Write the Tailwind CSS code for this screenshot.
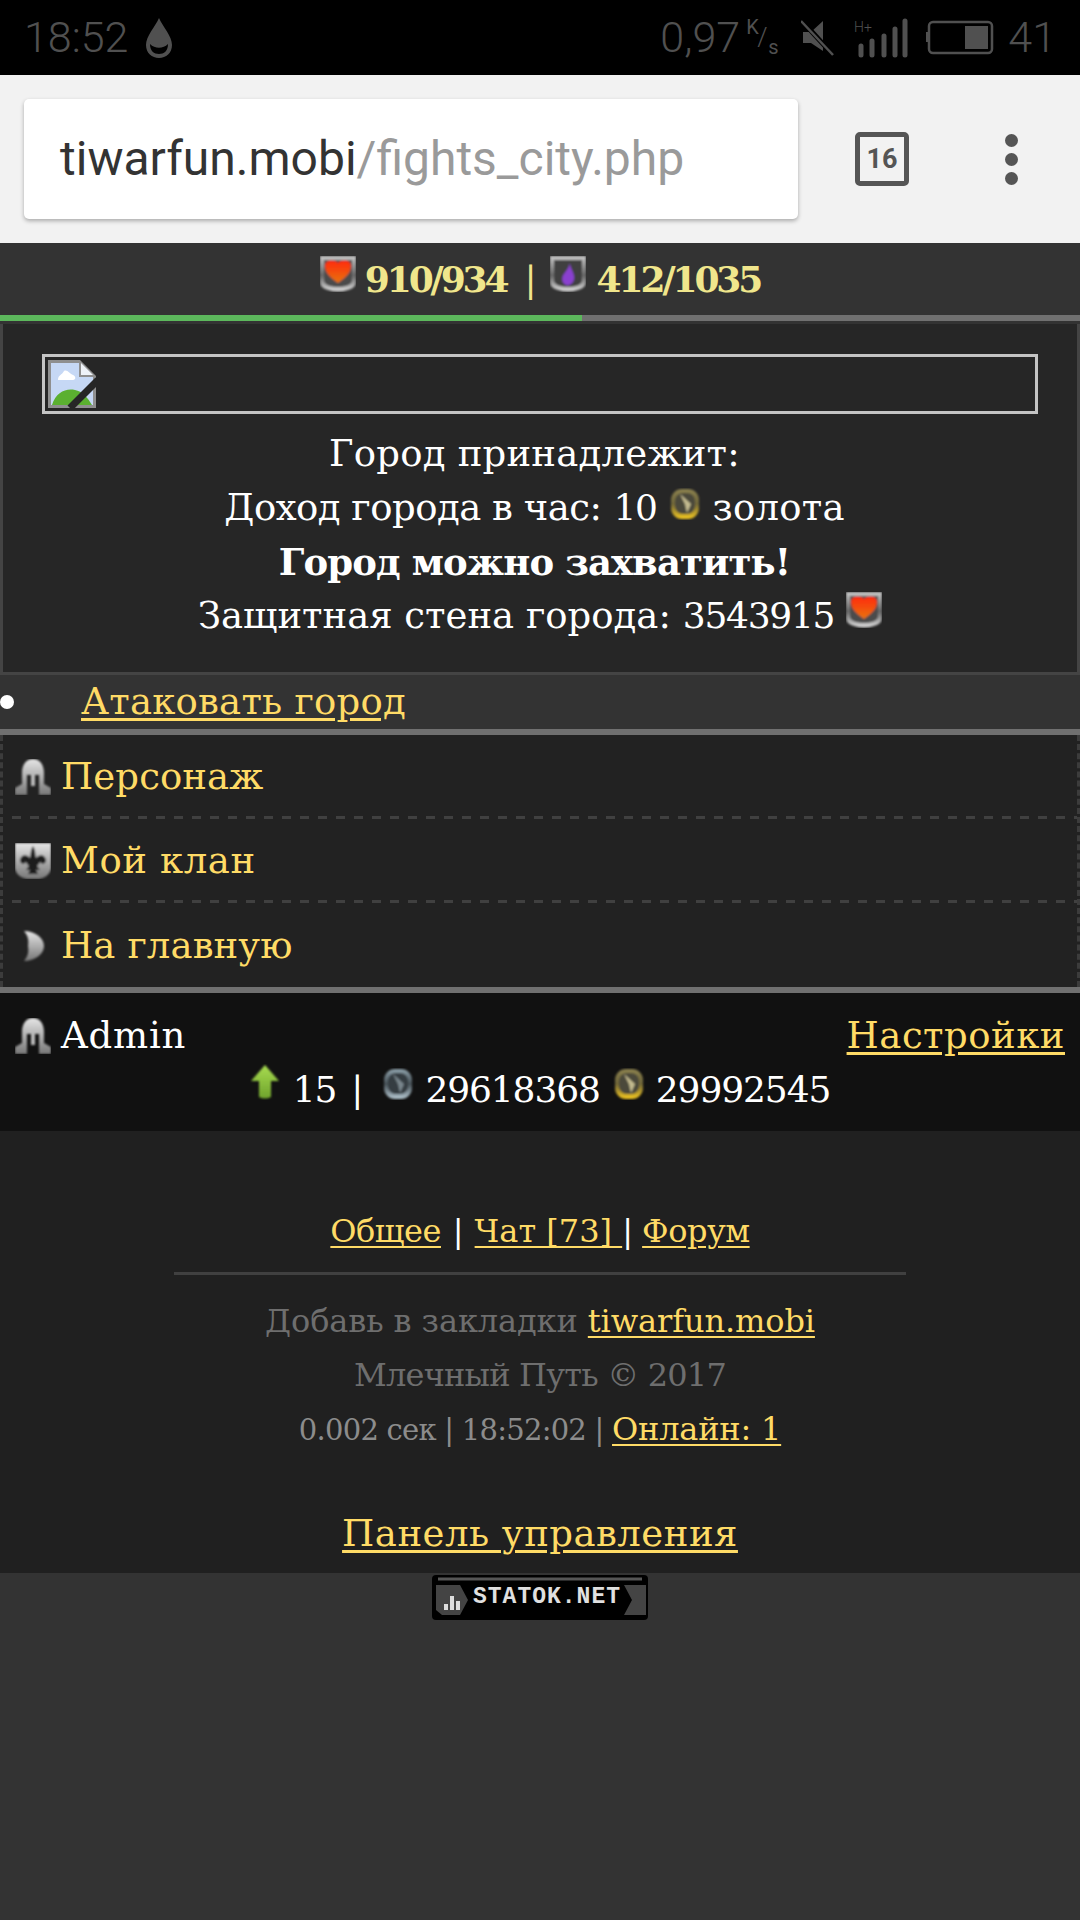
<!DOCTYPE html>
<html lang="ru"><head><meta charset="utf-8">
<script src="https://cdn.jsdelivr.net/npm/@tailwindcss/browser@4"></script>
</head>
<body class="bg-[#333333] font-['DejaVu_Serif','Liberation_Serif',serif]">
<svg class="absolute w-0 h-0" width="0" height="0">
 <defs>
  <linearGradient id="shd" x1="0" y1="0" x2="0" y2="1"><stop offset="0" stop-color="#c9c9c9"/><stop offset="0.55" stop-color="#666"/><stop offset="1" stop-color="#ddd"/></linearGradient>
  <linearGradient id="hrt" x1="0" y1="0" x2="0" y2="1"><stop offset="0" stop-color="#ff2a10"/><stop offset="1" stop-color="#e8740c"/></linearGradient>
  <linearGradient id="met" x1="0" y1="0" x2="0" y2="1"><stop offset="0" stop-color="#e6e6e6"/><stop offset="1" stop-color="#777"/></linearGradient>
  <linearGradient id="gold" x1="0" y1="0" x2="0" y2="1"><stop offset="0" stop-color="#8d8350"/><stop offset="0.5" stop-color="#6e6538"/><stop offset="1" stop-color="#f5c920"/></linearGradient>
  <linearGradient id="silv" x1="0" y1="0" x2="0" y2="1"><stop offset="0" stop-color="#8fa3ad"/><stop offset="0.5" stop-color="#454f55"/><stop offset="1" stop-color="#b5c8d2"/></linearGradient>
  <linearGradient id="arr" x1="0" y1="0" x2="0" y2="1"><stop offset="0" stop-color="#a8dc50"/><stop offset="1" stop-color="#6fa32c"/></linearGradient>
  <filter id="sft" x="-10%" y="-10%" width="120%" height="120%"><feGaussianBlur stdDeviation="0.8"/></filter>
  <symbol id="i-heart" viewBox="0 0 36 36"><g filter="url(#sft)"><path d="M0 0H36V26Q36 32 28 34Q18 37 8 34Q0 32 0 26Z" fill="url(#shd)"/><path d="M4 4H32V24Q32 28 26 30Q18 32 10 30Q4 28 4 24Z" fill="#4c4c4c"/><path d="M18 27C11 22 5 17 5 10C5 4 14 3 18 7C22 3 31 4 31 10C31 17 25 22 18 27Z" fill="url(#hrt)"/></g></symbol>
  <symbol id="i-mana" viewBox="0 0 36 36"><g filter="url(#sft)"><path d="M0 0H36V26Q36 32 28 34Q18 37 8 34Q0 32 0 26Z" fill="url(#shd)"/><path d="M4 4H32V24Q32 28 26 30Q18 32 10 30Q4 28 4 24Z" fill="#414141"/><path d="M20 7C20 13 25 17 24 23C23 28 19 30 16 29C12 27 11 22 14 18C16 15 19 12 20 7Z" fill="#8a3fd0"/></g></symbol>
  <symbol id="i-gold" viewBox="0 0 32 32"><g filter="url(#sft)"><rect x="2" y="1" width="28" height="30" rx="11" fill="url(#gold)"/><rect x="6" y="5" width="20" height="21" rx="8" fill="#4b4a3a"/><path d="M11 6L22 16L18 25L16 16Z" fill="#c4bb90"/></g></symbol>
  <symbol id="i-silver" viewBox="0 0 32 32"><g filter="url(#sft)"><rect x="2" y="1" width="28" height="30" rx="11" fill="url(#silv)"/><rect x="6" y="5" width="20" height="21" rx="8" fill="#363d42"/><path d="M11 6L22 16L18 25L16 16Z" fill="#79868d"/></g></symbol>
  <symbol id="i-helm" viewBox="0 0 36 36"><g filter="url(#sft)"><path d="M18 0C11 0 7 6 7 14V25L0 29V36H12V16H24V36H36V29L29 25V14C29 6 25 0 18 0Z" fill="url(#met)"/><path d="M16 15H20V27H16Z" fill="#bbb"/></g></symbol>
  <symbol id="i-clan" viewBox="0 0 36 36"><g filter="url(#sft)"><path d="M0 0H36V26Q34 34 24 36H12Q2 34 0 26Z" fill="url(#met)"/><path d="M18 3C21 8 20 12 21 15C24 11 30 11 31 17C31 21 27 22 25 19C24 21 23 22 22 23L25 27H21L23 31H13L15 27H11L14 23C13 22 12 21 11 19C9 22 5 21 5 17C6 11 12 11 15 15C16 12 15 8 18 3Z" fill="#1b1b1b"/></g></symbol>
  <symbol id="i-moon" viewBox="0 0 36 36"><g filter="url(#sft)"><path d="M9 3C20 3 29 10 29 18C29 26 20 33 9 33C13 28 14 24 13 18C14 12 13 8 9 3Z" fill="url(#met)"/></g></symbol>
  <symbol id="i-arrow" viewBox="0 0 30 36"><g filter="url(#sft)"><path d="M15 1L29 17H21V33Q15 36 9 33V17H1Z" fill="url(#arr)"/></g></symbol>
 </defs>
</svg>

<div class="w-[1080px] h-[1920px] overflow-hidden flex flex-col">
 <!-- status bar -->
 <div class="h-[75px] bg-black flex items-center justify-between pl-[24px] pr-[24px] font-['Roboto',sans-serif] text-[43px] font-light text-[#505050]">
  <div class="flex items-center gap-[16px]"><span>18:52</span>
   <svg width="30" height="42" viewBox="0 0 30 42"><path d="M15 1C11 10 2 19 2 28C2 36 8 41 15 41C22 41 28 36 28 28C28 19 19 10 15 1Z" fill="#505050"/><path d="M6 27C11 32 19 32 24 27C24 34 20 37 15 37C10 37 6 34 6 27Z" fill="#000"/></svg>
  </div>
  <div class="flex items-center">
   <span class="w-[78px]">0,97</span>
   <span class="relative w-[34px] h-[46px] ml-[8px] text-[20px] font-normal leading-none"><span class="absolute left-0 top-[2px]">K</span><span class="absolute left-[11px] top-[9px] text-[26px] font-light">/</span><span class="absolute left-[22px] top-[22px]">s</span></span>
   <svg class="ml-[21px]" width="34" height="38" viewBox="0 0 34 38"><path d="M2 13H10L22 2V32L10 24H2Z" fill="#505050"/><path d="M2 3L33 37" stroke="#000" stroke-width="5"/><path d="M0 2L32 36" stroke="#505050" stroke-width="2.5"/></svg>
   <svg class="ml-[19px]" width="54" height="40" viewBox="0 0 54 40"><text x="0" y="14" font-family="Roboto" font-size="14" fill="#505050">H+</text><g stroke="#505050" stroke-width="5" stroke-linecap="round"><path d="M7 28V37M18 23V37M30 18V37M41 11V37M51 3V37" /></g></svg>
   <svg class="ml-[18px]" width="68" height="36" viewBox="0 0 68 36"><rect x="3" y="2" width="63" height="31" rx="4" fill="none" stroke="#505050" stroke-width="2.5"/><rect x="0" y="12" width="3" height="10" fill="#505050"/><rect x="39" y="6" width="23" height="23" fill="#505050"/></svg>
   <span class="ml-[14px]">41</span>
  </div>
 </div>
 <!-- browser bar -->
 <div class="h-[168px] bg-[#f2f2f2] flex items-center pl-[24px] font-['Roboto',sans-serif]">
  <div class="w-[774px] h-[120px] bg-white rounded-[5px] shadow-[0_2px_4px_rgba(0,0,0,0.3)] flex items-center pl-[36px] text-[48px]"><span class="text-[#333333]">tiwarfun.mobi</span><span class="text-[#9a9a9a]">/fights_city.php</span></div>
  <div class="ml-[57px] w-[54px] h-[54px] border-[5px] border-[#555555] rounded-[5px] flex items-center justify-center text-[#555555] text-[27px] font-bold">16</div>
  <div class="ml-[96px] flex flex-col gap-[6px]"><div class="w-[13px] h-[13px] rounded-full bg-[#555555]"></div><div class="w-[13px] h-[13px] rounded-full bg-[#555555]"></div><div class="w-[13px] h-[13px] rounded-full bg-[#555555]"></div></div>
 </div>
 <!-- hp/mp -->
 <div class="h-[72px] bg-[#333333] text-center text-[#f0e68c] font-bold text-[36px] leading-[72px] tracking-[-3.1px] whitespace-nowrap">
  <svg class="inline align-baseline" width="36" height="36"><use href="#i-heart"/></svg><span class="ml-[9px]">910/934</span><span class="ml-[18px] font-normal">|</span><svg class="inline align-baseline ml-[16px]" width="36" height="36"><use href="#i-mana"/></svg><span class="ml-[11px]">412/1035</span>
 </div>
 <div class="h-[6px] bg-[#707070]"><div class="w-[582px] h-full bg-[#5cb85c]"></div></div>
 <!-- city panel -->
 <div class="mt-[3px] h-[351px] bg-[#262626] border-x-[3px] border-b-[3px] border-[#444444] pl-[39px] pr-[39px] pt-[30px] text-white text-[37px] tracking-[0.22px] text-center">
  <div class="h-[60px] border-[3px] border-[#c4c4c4] p-[3px] flex">
   <svg width="48" height="48" viewBox="0 0 48 48"><path d="M0 0H32L48 16V48H0Z" fill="#8f8f8f"/><path d="M3 3H31V17H45V45H3Z" fill="#c6d8f5"/><path d="M33 3L45 15H33Z" fill="#eef2f8"/><path d="M10 20C10 15 14 15 16 11C19 9 22 14 25 15C28 16 28 20 25 20Z" fill="#fff"/><path d="M4 45C8 32 18 28 27 30C34 31 40 38 44 45Z" fill="#5bb030"/><path d="M22 48L50 20" stroke="#262626" stroke-width="7"/></svg>
  </div>
  <div class="mt-[13px] leading-[54px] whitespace-nowrap">
   <div class="mr-[11px]">Город принадлежит:</div>
   <div class="mr-[11px]"><span class="tracking-[-0.5px]">Доход города в час:</span> <span class="text-[36px] tracking-[-1.3px]">10</span> <svg class="inline align-baseline" width="32" height="32"><use href="#i-gold"/></svg> золота</div>
   <div class="mr-[11px] font-bold tracking-[-0.9px]">Город можно захватить!</div>
   <div><span class="tracking-[0px]">Защитная стена города:</span> <span class="text-[36px] tracking-[-1.3px]">3543915</span> <svg class="inline align-baseline" width="36" height="36"><use href="#i-heart"/></svg></div>
  </div>
 </div>
 <!-- attack -->
 <div class="h-[54px] flex items-center bg-[#333333] text-[37px] tracking-[0.22px]">
  <div class="w-[14px] h-[14px] rounded-full bg-white"></div>
  <a class="ml-[67px] text-[#ffdb66] underline decoration-[3px] underline-offset-[4px]">Атаковать город</a>
 </div>
 <div class="h-[6px] bg-[#707070] shrink-0"></div>
 <!-- menu -->
 <div class="h-[252px] bg-[#222222] border-x-[3px] border-dashed border-[#3c3c3c] text-[#ffdb66] text-[37px] tracking-[0.1px]">
  <div class="h-[81px] pt-[2px] flex items-center pl-[12px]"><svg width="36" height="36"><use href="#i-helm"/></svg><span class="ml-[10px]">Персонаж</span></div>
  <div class="h-[3px] ml-[9px] bg-[repeating-linear-gradient(90deg,#404040_0_9px,transparent_9px_18px)]"></div>
  <div class="h-[81px] pt-[2px] flex items-center pl-[12px]"><svg width="36" height="36"><use href="#i-clan"/></svg><span class="ml-[10px] tracking-[0.6px]">Мой клан</span></div>
  <div class="h-[3px] ml-[9px] bg-[repeating-linear-gradient(90deg,#404040_0_9px,transparent_9px_18px)]"></div>
  <div class="h-[84px] pt-[2px] flex items-center pl-[12px]"><svg width="36" height="36"><use href="#i-moon"/></svg><span class="ml-[10px]">На главную</span></div>
 </div>
 <div class="h-[6px] bg-[#707070] shrink-0"></div>
 <!-- user strip -->
 <div class="h-[138px] bg-[#111111] text-white text-[36px] tracking-[0.8px] px-[15px] pt-[16px] leading-[54px]">
  <div class="flex justify-between text-[37px]"><div class="flex items-center"><svg width="36" height="36"><use href="#i-helm"/></svg><span class="ml-[10px] tracking-[0.8px]">Admin</span></div><a class="text-[#ffdb66] tracking-[0.5px] underline decoration-[3px] underline-offset-[4px]">Настройки</a></div>
  <div class="text-center whitespace-nowrap tracking-[-1.1px]"><svg class="inline align-[2px]" width="30" height="36"><use href="#i-arrow"/></svg><span class="ml-[13px]">15</span><span class="ml-[15px]">|</span><svg class="inline align-[2px] ml-[20px]" width="32" height="32"><use href="#i-silver"/></svg><span class="ml-[11px]">29618368</span><svg class="inline align-[2px] ml-[13px]" width="32" height="32"><use href="#i-gold"/></svg><span class="ml-[11px]">29992545</span></div>
 </div>
 <!-- footer -->
 <div class="h-[442px] bg-[#202020] text-center whitespace-nowrap">
  <div class="pt-[73px] text-[32px] leading-[54px] tracking-[-0.5px] text-white"><a class="text-[#ffdb66] underline decoration-[2px] underline-offset-[4px]">Общее</a><span class="mx-[2px]"> | </span><a class="text-[#ffdb66] tracking-[0px] underline decoration-[2px] underline-offset-[4px]">Чат [73] </a>| <a class="text-[#ffdb66] underline decoration-[2px] underline-offset-[4px]">Форум</a></div>
  <div class="mx-[174px] mt-[14px] h-[3px] bg-[#404040]"></div>
  <div class="mt-[19px] text-[32px] leading-[54px] tracking-[-0.1px] text-[#6e6e6e]">Добавь в закладки <a class="text-[#ffdb66] underline decoration-[2px] underline-offset-[4px]">tiwarfun.mobi</a></div>
  <div class="text-[32px] leading-[54px] tracking-[-0.8px] text-[#6e6e6e]">Млечный Путь © 2017</div>
  <div class="text-[29px] leading-[54px] tracking-[-0.75px] text-[#8c8c8c]">0.002 сек | 18:52:02 | <a class="text-[32px] tracking-[-0.2px] text-[#ffdb66] underline decoration-[2px] underline-offset-[4px]">Онлайн: 1</a></div>
  <div class="mt-[50px] text-[37px] leading-[54px] tracking-[0.5px]"><a class="text-[#ffdb66] underline decoration-[3px] underline-offset-[4px]">Панель управления</a></div>
 </div>
 <!-- statok -->
 <div class="mt-[2px] flex justify-center">
  <div class="relative w-[216px] h-[45px] bg-black rounded-[4px] flex items-center pl-[41px] font-['Liberation_Mono',monospace] font-bold text-[23px] text-[#e0e0e0] tracking-[1px]">
   <svg class="absolute left-[2px] top-[2px]" width="212" height="41" viewBox="0 0 212 41"><path d="M4 2H208" stroke="#555" stroke-width="3"/><path d="M2 8H26L34 23L26 38H8L2 33Z" fill="#444"/><path d="M10 27h4v6h-4zM16 19h4v14h-4zM22 24h4v9h-4z" fill="#ddd"/><path d="M190 8H212V38H190L198 23Z" fill="#444"/></svg>
   <span class="relative">STATOK.NET</span>
  </div>
 </div>
</div>
</body></html>
